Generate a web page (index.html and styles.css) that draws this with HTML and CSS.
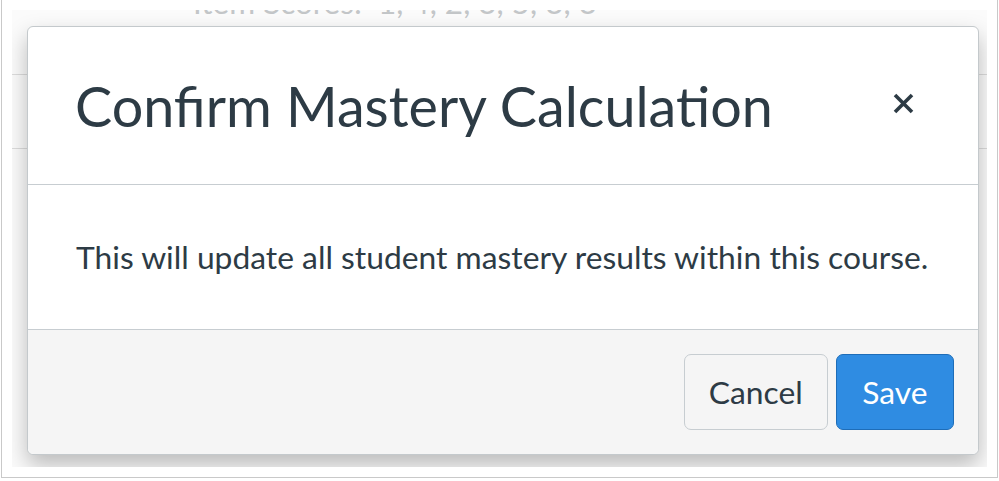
FILE: index.html
```html
<!DOCTYPE html>
<html lang="en">
<head>
    <meta charset="UTF-8">
    <meta name="viewport" content="width=device-width, initial-scale=1.0">
    <title>Confirm Mastery Calculation</title>
    <link rel="stylesheet" href="styles.css">
</head>
<body>

<div class="frame">
    <div class="page">
        <div class="page-content">
            <div class="page-row scores">Item Scores:&nbsp; 1, 4, 2, 3, 5, 3, 3</div>
            <div class="page-row"></div>
        </div>

        <div class="modal" role="dialog">
            <div class="modal-header">
                <h2>Confirm Mastery Calculation</h2>
                <button class="close-button" aria-label="Close">
                    <svg width="21" height="21" viewBox="0 0 21 21">
                        <path d="M2 2 L19 19 M19 2 L2 19" stroke="#2d3b45" stroke-width="3.6" fill="none"/>
                    </svg>
                </button>
            </div>
            <div class="modal-body">
                <p>This will update all student mastery results within this course.</p>
            </div>
            <div class="modal-footer">
                <button class="btn">Cancel</button>
                <button class="btn btn-primary">Save</button>
            </div>
        </div>
    </div>
</div>

</body>
</html>
```

FILE: styles.css
```css
* {
    box-sizing: border-box;
}
body {
    margin: 0;
    background: #fff;
    font-family: Lato, "Open Sans", sans-serif;
    color: #2d3b45;
}
.frame {
    margin-left: 1px;
    width: 997px;
    height: 478px;
    padding: 10px;
    border: 1px solid #c9c9c9;
    border-top: none;
}
.page {
    position: relative;
    height: 457px;
    overflow: hidden;
    background: #fbfbfb;
}
.page-content {
    margin-top: -27px;
}
.page-row {
    height: 74px;
    border-bottom: 1px solid #dcdcdc;
}
.scores {
    height: 92px;
    padding-left: 181px;
    font-size: 31.5px;
    line-height: 38px;
    color: #c3c6c8;
}
.modal {
    position: absolute;
    left: 15px;
    top: 16px;
    width: 952px;
    height: 429px;
    display: flex;
    flex-direction: column;
    background: #fff;
    border: 1px solid #c4c9cc;
    border-radius: 6px;
    box-shadow: 0 10px 22px rgba(0, 0, 0, 0.26);
}
.modal-header {
    height: 158px;
    display: flex;
    align-items: center;
    justify-content: space-between;
    padding: 0 64px 0 47px;
    border-bottom: 1px solid #c7cdd1;
}
.modal-header h2 {
    margin: 0;
    font-size: 55.7px;
    font-weight: normal;
    line-height: 62px;
}
.close-button {
    border: none;
    background: none;
    padding: 0;
    width: 21px;
    height: 21px;
    margin-top: -4px;
    cursor: pointer;
}
.close-button svg {
    display: block;
}
.modal-body {
    height: 145px;
    display: flex;
    align-items: center;
    padding: 0 20px 0 48px;
    border-bottom: 1px solid #c7cdd1;
}
.modal-body p {
    margin: 0;
    font-size: 31.8px;
    line-height: 38px;
    white-space: nowrap;
}
.modal-footer {
    flex: 1;
    display: flex;
    align-items: center;
    justify-content: flex-end;
    gap: 8px;
    padding: 0 24px;
    background: #f5f5f5;
    border-radius: 0 0 6px 6px;
}
.btn {
    height: 76px;
    padding: 0 24px;
    font-family: Lato, "Open Sans", sans-serif;
    font-size: 31.8px;
    color: #2d3b45;
    background: #f5f5f5;
    border: 1px solid #c7cdd1;
    border-radius: 7px;
    cursor: pointer;
}
.btn-primary {
    padding: 0 25.5px;
    color: #fff;
    background: #2f8ce2;
    border-color: #1e6db8;
}
```
